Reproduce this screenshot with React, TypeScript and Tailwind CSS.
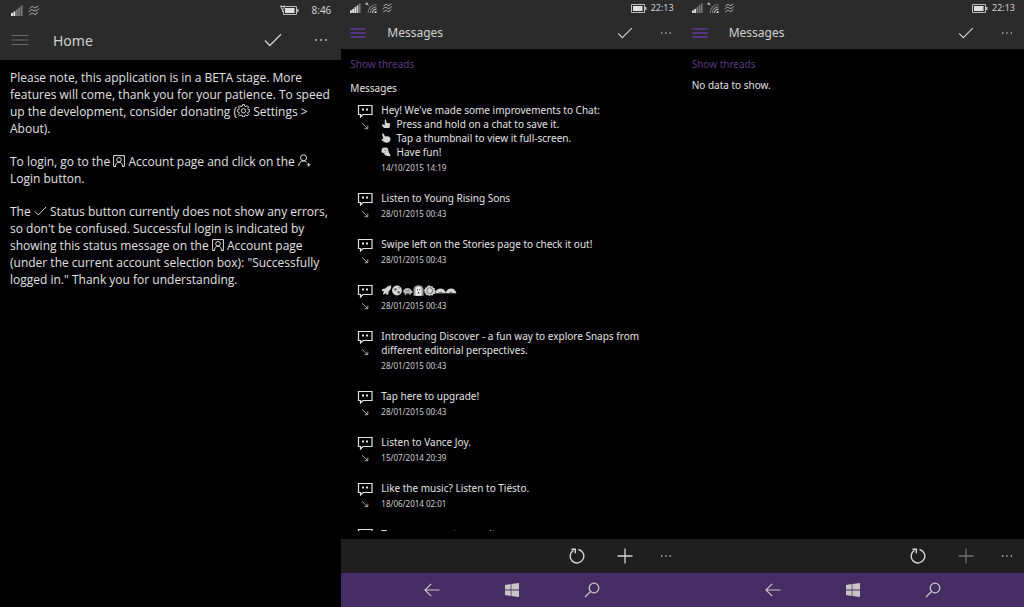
import React from 'react';

interface Message {
  id: number;
  lines: React.ReactNode[];
  date?: string;
}

interface IconProps {
  className?: string;
}

const SignalIcon: React.FC<{ weak?: boolean; className?: string }> = ({ weak = false, className }) => (
  <svg viewBox="0 0 12 11" className={className} aria-hidden="true">
    <rect x="0" y="8" width="2" height="3" fill="#e4e4e4" />
    <rect x="2.4" y="6.5" width="2" height="4.5" fill="#e4e4e4" />
    <rect x="4.8" y="4.5" width="2" height="6.5" fill={weak ? '#777' : '#e4e4e4'} />
    <rect x="7.2" y="2.5" width="2" height="8.5" fill={weak ? '#777' : '#d0d0d0'} />
    <rect x="9.6" y="0.5" width="2" height="10.5" fill="#777" />
  </svg>
);

const WifiIcon: React.FC<IconProps> = ({ className }) => (
  <svg viewBox="0 0 13 12" className={className} fill="none" aria-hidden="true">
    <path d="M1 1.2l2.5 2M1 1.2v1.6M1 1.2h1.8" stroke="#ccc" strokeWidth="1" />
    <path d="M3 11A8.5 8.5 0 0 1 11.5 2.5" stroke="#777" strokeWidth="1.1" />
    <path d="M5.3 11A6.2 6.2 0 0 1 11.5 4.9" stroke="#888" strokeWidth="1.1" />
    <path d="M7.5 11a4 4 0 0 1 4-3.9" stroke="#bbb" strokeWidth="1.1" />
    <path d="M9.3 11a2.2 2.2 0 0 1 2.2-2.1V11z" fill="#ddd" />
  </svg>
);

const VibrateIcon: React.FC<IconProps> = ({ className }) => (
  <svg viewBox="0 0 12 11" className={className} fill="none" stroke="#c4c4c4" strokeWidth="1" aria-hidden="true">
    <path d="M1.8 3.6C3.400 1 4.600 1.300 5.800 2.300S8.400 3 10 .6" />
    <path d="M.8 7C2.600 4.200 4.200 4.500 5.700 5.500s3.200.6 5.300-2" />
    <path d="M1.600 10.200c1.600-2.600 2.900-2.400 4.200-1.400s2.600.7 4.200-1.700" />
  </svg>
);

const BatteryIcon: React.FC<IconProps & { charging?: boolean }> = ({ className, charging = false }) => (
  <svg viewBox="0 0 19 11" className={className} fill="none" aria-hidden="true">
    <path d="M3.500 1.500h13v8h-13z" stroke="#bdbdbd" strokeWidth="1" />
    <path d="M5 3h9.500v5H5z" fill="#e0e0e0" />
    <path d="M17 4h1.500v3H17z" fill="#bdbdbd" />
    {charging && (
      <>
        <path d="M0 0h5v5.500H0z" fill="#2b2b2b" />
        <path d="M1 .3v2.200a1.600 1.600 0 0 0 3.200 0V.3M2.600 4v3M1 1.500h3.200" stroke="#d8d8d8" strokeWidth="1" />
      </>
    )}
  </svg>
);

const MenuIcon: React.FC<IconProps> = ({ className }) => (
  <svg viewBox="0 0 18 12" className={className} fill="none" stroke="currentColor" aria-hidden="true">
    <path d="M.5 1.500h17M.5 6h17M.5 10.500h17" />
  </svg>
);

const CheckIcon: React.FC<IconProps> = ({ className }) => (
  <svg viewBox="0 0 18 14" className={className} fill="none" stroke="currentColor" strokeWidth="1.300" aria-hidden="true">
    <path d="M1 7.500L5.800 12.500 17 1.200" />
  </svg>
);

const DotsIcon: React.FC<IconProps> = ({ className }) => (
  <svg viewBox="0 0 14 4" className={className} fill="currentColor" aria-hidden="true">
    <circle cx="2" cy="2" r=".9" />
    <circle cx="7" cy="2" r=".9" />
    <circle cx="12" cy="2" r=".9" />
  </svg>
);

const RefreshIcon: React.FC<IconProps> = ({ className }) => (
  <svg viewBox="0 0 16 16" className={className} fill="none" stroke="currentColor" strokeWidth="1.400" aria-hidden="true">
    <path d="M9.500 1.500A6.800 6.800 0 1 1 4.300 2.400" />
    <path d="M2.500 1.200h3.800v4" />
  </svg>
);

const PlusIcon: React.FC<IconProps> = ({ className }) => (
  <svg viewBox="0 0 16 16" className={className} fill="none" stroke="currentColor" strokeWidth="1.300" aria-hidden="true">
    <path d="M8 .5v15M.5 8h15" />
  </svg>
);

const BackIcon: React.FC<IconProps> = ({ className }) => (
  <svg viewBox="0 0 16 14" className={className} fill="none" stroke="currentColor" strokeWidth="1.200" aria-hidden="true">
    <path d="M15.500 7H1.200M7.200 .8L1 7l6.200 6.200" />
  </svg>
);

const WindowsIcon: React.FC<IconProps> = ({ className }) => (
  <svg viewBox="0 0 16 14" className={className} fill="currentColor" aria-hidden="true">
    <path d="M1 1.900L6.700 1.100V6.600H1zM7.400 1L15 0v6.600H7.400zM1 7.400h5.700v5.500L1 12.100zM7.400 7.400H15V14l-7.600-1z" />
  </svg>
);

const SearchIcon: React.FC<IconProps> = ({ className }) => (
  <svg viewBox="0 0 16 16" className={className} fill="none" stroke="currentColor" strokeWidth="1.300" aria-hidden="true">
    <circle cx="10" cy="6" r="4.800" />
    <path d="M6.500 9.500L1 15" />
  </svg>
);

const GearIcon: React.FC<IconProps> = ({ className }) => (
  <svg viewBox="0 0 24 24" className={className} fill="none" stroke="currentColor" strokeWidth="1.800" aria-hidden="true">
    <path d="M10.300 1h3.400l.6 3 2.200.9L19 3.200 21.400 5.600l-1.700 2.500.9 2.200 3 .6v3.400l-3 .6-.9 2.200 1.700 2.500-2.400 2.400-2.500-1.700-2.200.9-.6 2.600h-3.400l-.6-2.600-2.200-.9L5 22l-2.400-2.400 1.700-2.500-.9-2.200-3-.6v-3.400l3-.6.9-2.200L2.600 5.600 5 3.200l2.500 1.700L9.700 4z" />
    <circle cx="12" cy="12.500" r="4" />
  </svg>
);

const AccountIcon: React.FC<IconProps> = ({ className }) => (
  <svg viewBox="0 0 12 12" className={className} fill="none" stroke="currentColor" strokeWidth="1" aria-hidden="true">
    <path d="M2.300 11.500H.6V.6h10.800v10.900H9.700" />
    <circle cx="6" cy="4.800" r="2.300" />
    <path d="M2.300 11.800C2.600 8.700 4 7.200 6 7.200s3.400 1.500 3.700 4.600" />
  </svg>
);

const LoginIcon: React.FC<IconProps> = ({ className }) => (
  <svg viewBox="0 0 13 13" className={className} fill="none" stroke="currentColor" strokeWidth="1" aria-hidden="true">
    <circle cx="5.500" cy="3.800" r="3" />
    <path d="M.6 12C.8 8.800 2.800 7 5.500 7c1.500 0 2.800.6 3.700 1.700" />
    <path d="M10.700 9v3.600M8.900 10.800h3.600" />
  </svg>
);

const ChatIcon: React.FC<IconProps> = ({ className }) => (
  <svg viewBox="0 0 16 14" className={className} fill="none" stroke="currentColor" strokeWidth="1.200" aria-hidden="true">
    <path d="M1.500 1.500h13.500v9H6L3.500 13V10.500h-2z" />
    <path d="M5 4.500h2v2H5zM9 4.500h2v2H9z" fill="currentColor" stroke="none" />
  </svg>
);

const IncomingIcon: React.FC<IconProps> = ({ className }) => (
  <svg viewBox="0 0 8 8" className={className} fill="none" stroke="currentColor" strokeWidth=".9" aria-hidden="true">
    <path d="M1 1.200l5.500 5.300M6.800 3.500v3.200H3.500" />
  </svg>
);

const emojiClass = 'inline-block size-[10px] align-[-1px]';

const HandUp: React.FC = () => (
  <svg viewBox="0 0 10 10" className={emojiClass} fill="#d6d6d6" aria-hidden="true">
    <path d="M3.800 1.200c0-.9 1.300-.9 1.400 0l.2 2.600 3 .5c.6.200.8.700.7 1.300L8.500 9H3L1 6.500c-.3-.7.200-1.200.8-1l2 .5z" />
  </svg>
);

const HandTap: React.FC = () => (
  <svg viewBox="0 0 10 10" className={emojiClass} fill="#d6d6d6" aria-hidden="true">
    <path d="M1 .8C1.600.1 2.500.4 2.800 1l1.300 2.600c1.500-.7 4-.3 4.900 1 .8 1.300.6 3-.6 4.100-1.400 1.200-3.800 1.400-5.200.3L.8 7.300C.1 6.500.8 5.700 1.700 6l.5-.2z" />
  </svg>
);

const Ghost: React.FC = () => (
  <svg viewBox="0 0 10 10" className={emojiClass} fill="#d6d6d6" aria-hidden="true">
    <path d="M2 .8C4 .2 6.500.3 7 2l.8 3.500L9.500 8c.2 1-.6 1.300-1.500 1.200L4.500 8.500C3.500 8 3.200 7 3 6.200L.8 5.500C.2 4 .5 1.500 2 .8z" />
    <path d="M3 3l1.200 1M5 2.500l.6 1.200M3.500 5.800l1.300-.8" stroke="#555" strokeWidth=".5" />
  </svg>
);

const DoodleRow: React.FC = () => (
  <svg viewBox="0 0 76 11" className="inline-block h-[11px] w-[76px] align-[-2px]" fill="#d6d6d6" role="img" aria-label="Rocket, globe, turtle, ghost, sun, rainbows">
    <path d="M10.300.6C7.500.8 5.500 2 4.300 3.600L1.500 4 .6 6l2.200.2-.9 3.500 3.300-1.500.4 2 1.800-1.200.2-2.400C9.300 5.200 10.300 3 10.300.6z" />
    <circle cx="16" cy="5.500" r="4.900" />
    <path d="M12.500 4l2.500-1 1 1.500-1.500 1.500zM16.500 6l3 .5-1.500 2.500-1.500-1zM17 1.800l2 1-1 1z" fill="#666" />
    <path d="M22 7c.5-3 2.500-4 4.500-4 2.200 0 3.300 1 4 2.500l1.200.7-.4 1.800-1.500.2v1.600h-1.600V8.500h-3v1.300h-1.600V8z" fill="#bbb" />
    <path d="M24.500 5l1.500 1.500 2-2M28.500 6.500l-1-.7" stroke="#444" strokeWidth=".6" fill="none" />
    <path d="M32.500 10.800V4.500C32.800 1.500 34.800.3 37.500.3s4.800 1.200 5 4.200v6.300z" fill="#999" />
    <path d="M34.500 10.800V4.500c0-4 6-4 6 0v6.300z" fill="#eee" />
    <path d="M36 4h.9v1.300H36zM38.300 4h.9v1.300h-.9zM36.800 7h1.500v1.500h-1.500z" fill="#333" />
    <path d="M48.500.2l1.200 1.400 1.700-.7.500 1.800 1.900.2-.3 1.900L55 5.900 53.700 7l.3 1.900-1.900.1-.6 1.700-1.600-.8-1.400 1-1.300-1-1.700.5-.4-1.700-1.700-.5.400-1.600L42.500 5.300 44 4.200l0-1.700 1.800-.1.700-1.500z" />
    <circle cx="48.700" cy="5.700" r="3" fill="none" stroke="#555" strokeWidth=".8" />
    <path d="M54 8.300C55 5 57.300 3.600 59.500 3.600S64 5 65 8.300z" />
    <path d="M64.500 8.300c1-3.300 3.300-4.700 5.500-4.700s4.500 1.400 5.500 4.700z" />
    <path d="M57.500 8.300c.8-2 3.200-2 4 0M68 8.300c.8-2 3.200-2 4 0" fill="#777" />
  </svg>
);

const messages: Message[] = [
  {
    id: 1,
    lines: [
      "Hey! We've made some improvements to Chat:",
      <><HandUp />&nbsp; Press and hold on a chat to save it.</>,
      <><HandTap />&nbsp; Tap a thumbnail to view it full-screen.</>,
      <><Ghost />&nbsp; Have fun!</>
    ],
    date: '14/10/2015 14:19'
  },
  { id: 2, lines: ['Listen to Young Rising Sons'], date: '28/01/2015 00:43' },
  { id: 3, lines: ['Swipe left on the Stories page to check it out!'], date: '28/01/2015 00:43' },
  { id: 4, lines: [<DoodleRow />], date: '28/01/2015 00:43' },
  {
    id: 5,
    lines: ['Introducing Discover - a fun way to explore Snaps from', 'different editorial perspectives.'],
    date: '28/01/2015 00:43'
  },
  { id: 6, lines: ['Tap here to upgrade!'], date: '28/01/2015 00:43' },
  { id: 7, lines: ['Listen to Vance Joy.'], date: '15/07/2014 20:39' },
  { id: 8, lines: ['Like the music? Listen to Tiësto.'], date: '18/06/2014 02:01' },
  { id: 9, lines: ['Tap a message to save it.'] }
];

const HomeScreen: React.FC = () => (
  <section className="flex min-w-0 flex-col">
    <header className="bg-[#2b2b2b] text-[#d0d0d0]">
      <div className="flex h-5 items-center pr-[10px] pl-[11px]">
        <SignalIcon weak className="h-[11px] w-3" />
        <VibrateIcon className="ml-[5px] h-[11px] w-3" />
        <BatteryIcon charging className="ml-auto h-[11px] w-[19px]" />
        <span className="ml-3 text-[10px] leading-4">8:46</span>
      </div>
      <div className="flex h-10 items-center">
        <button aria-label="Menu" className="flex h-full w-10 items-center justify-center text-[#6b6b6b]">
          <MenuIcon className="h-3 w-[18px]" />
        </button>
        <h1 className="flex-1 pl-[13px] text-[14px]">Home</h1>
        <button aria-label="Status" className="flex h-full w-14 items-center justify-center">
          <CheckIcon className="h-[14px] w-[18px]" />
        </button>
        <button aria-label="More" className="flex h-full w-10 items-center justify-center">
          <DotsIcon className="h-1 w-[14px]" />
        </button>
      </div>
    </header>

    <div className="flex flex-col gap-4 px-[10px] pt-[9px] font-['Open_Sans','Noto_Sans',sans-serif] text-[12px] leading-[17px] whitespace-nowrap">
      <p>
        Please note, this application is in a BETA stage. More<br />
        features will come, thank you for your patience. To speed<br />
        up the development, consider donating (<GearIcon className="inline-block size-[13px] align-[-1px]" /> Settings &gt;<br />
        About).
      </p>
      <p>
        To login, go to the <AccountIcon className="inline-block size-3 align-[-1px]" /> Account page and click on the{' '}
        <LoginIcon className="inline-block size-[13px] align-[-1px]" /><br />
        Login button.
      </p>
      <p>
        The <CheckIcon className="inline-block h-[10px] w-[13px] align-[0px]" /> Status button currently does not show any errors,<br />
        so don't be confused. Successful login is indicated by<br />
        showing this status message on the <AccountIcon className="inline-block size-3 align-[-1px]" /> Account page<br />
        (under the current account selection box): "Successfully<br />
        logged in." Thank you for understanding.
      </p>
    </div>
  </section>
);

interface MessagesScreenProps {
  items: Message[];
  weakSignal?: boolean;
}

const MessagesScreen: React.FC<MessagesScreenProps> = ({ items, weakSignal = false }) => {
  const empty = items.length === 0;

  return (
    <section className="flex min-h-0 min-w-0 flex-col text-[10px] leading-[14px]">
      <header className="shrink-0 bg-[#2b2b2b] text-[#d0d0d0]">
        <div className="flex h-4 items-center px-[9px]">
          <SignalIcon weak={weakSignal} className="h-[10px] w-[11px]" />
          <WifiIcon className="ml-1 h-3 w-[13px]" />
          <VibrateIcon className="ml-1 h-[10px] w-[11px]" />
          <BatteryIcon className="ml-auto h-[11px] w-[19px]" />
          <span className="ml-1 text-[9px]">22:13</span>
        </div>
        <div className="flex h-[33px] items-center">
          <button aria-label="Menu" className="flex h-full w-[34px] items-center justify-center text-[#543680]">
            <MenuIcon className="h-3 w-4 stroke-2" />
          </button>
          <h1 className="flex-1 pl-3 text-[12px]">Messages</h1>
          <button aria-label="Status" className="flex h-full w-12 items-center justify-center">
            <CheckIcon className="h-3 w-4" />
          </button>
          <button aria-label="More" className="flex h-full w-[34px] items-center justify-center">
            <DotsIcon className="h-1 w-3" />
          </button>
        </div>
      </header>

      <main className="mb-2 min-h-0 flex-1 overflow-hidden pt-2">
        <a href="#threads" className="ml-[9px] block w-fit text-[#57397f]">Show threads</a>
        {empty ? (
          <p className="mt-[7px] pl-[9px]">No data to show.</p>
        ) : (
          <>
            <h2 className="mt-[10px] pl-[9px]">Messages</h2>
            <ul className="mt-2">
              {items.map((message) => (
                <li key={message.id} className="flex gap-2 pb-4 pl-4">
                  <div className="flex w-4 shrink-0 flex-col items-center gap-1 pt-[1px]">
                    <ChatIcon className="h-[14px] w-4" />
                    <IncomingIcon className="size-2 text-[#b5b5b5]" />
                  </div>
                  <div>
                    {message.lines.map((line, i) => (
                      <p key={i} className="h-[14px] whitespace-nowrap">{line}</p>
                    ))}
                    {message.date && (
                      <time className="mt-[2px] block text-[8px] text-[#cfcfcf]">{message.date}</time>
                    )}
                  </div>
                </li>
              ))}
            </ul>
          </>
        )}
      </main>

      {/* App command bar */}
      <div className="flex h-[34px] shrink-0 justify-end bg-[#1f1f1f] text-[#d6d6d6]">
        <button aria-label="Refresh" className="flex w-12 items-center justify-center">
          <RefreshIcon className="size-4" />
        </button>
        <button aria-label="Add" disabled={empty} className="flex w-12 items-center justify-center disabled:text-[#707070]">
          <PlusIcon className="size-4" />
        </button>
        <button aria-label="More" className="flex w-[34px] items-center justify-center">
          <DotsIcon className="h-1 w-3" />
        </button>
      </div>

      {/* System navigation */}
      <nav className="flex h-[34px] shrink-0 justify-center bg-[#452c63] text-[#c9c6c6]">
        <button aria-label="Back" className="flex w-20 items-center justify-center">
          <BackIcon className="h-[14px] w-4" />
        </button>
        <button aria-label="Start" className="flex w-20 items-center justify-center">
          <WindowsIcon className="h-[14px] w-4" />
        </button>
        <button aria-label="Search" className="flex w-20 items-center justify-center">
          <SearchIcon className="size-4" />
        </button>
      </nav>
    </section>
  );
};

const App: React.FC = () => (
  <div className="grid h-screen grid-cols-3 grid-rows-1 overflow-hidden bg-black font-['Noto_Sans','Open_Sans',sans-serif] text-[#e2e2e2]">
    <HomeScreen />
    <MessagesScreen items={messages} />
    <MessagesScreen items={[]} weakSignal />
  </div>
);

export default App;
